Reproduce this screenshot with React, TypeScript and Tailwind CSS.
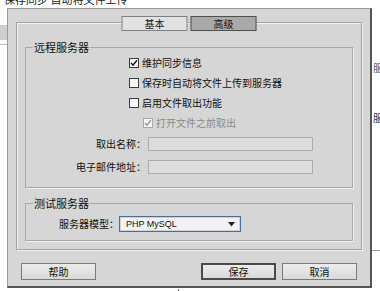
import React from "react";

// Dreamweaver-style "站点定义 › 高级" dialog, cropped
const CHECKS = [
  { label: "维护同步信息", checked: true },
  { label: "保存时自动将文件上传到服务器", checked: false },
  { label: "启用文件取出功能", checked: false },
];

function Check({ checked, disabled }: { checked: boolean; disabled?: boolean }) {
  return (
    <span
      className={
        "flex h-[10px] w-[10px] items-center justify-center border bg-[#f7f7f7] " +
        (disabled ? "border-[#a8a8a8]" : "border-[#3c3c3c]")
      }
    >
      {checked && (
        <svg width="8" height="8" viewBox="0 0 8 8">
          <path
            d="M1 4 L3 6.2 L7 1.2"
            fill="none"
            stroke={disabled ? "#9a9a9a" : "#111"}
            strokeWidth="1.4"
          />
        </svg>
      )}
    </span>
  );
}

function Button({ label, primary }: { label: string; primary?: boolean }) {
  return (
    <button
      type="button"
      className={
        "flex h-[17px] w-[75px] items-center justify-center bg-gradient-to-b from-[#ececec] to-[#d9d9d9] text-[10px] leading-none " +
        (primary ? "border-2 border-[#4a4a4a]" : "border border-[#7a7a7a]")
      }
    >
      {label}
    </button>
  );
}

export default function App() {
  return (
    <div className="relative h-[291px] w-[380px] overflow-hidden bg-white font-['Noto_Sans_CJK_SC',sans-serif] text-[10px] text-[#111]">
      {/* bits of the window behind the dialog */}
      <div className="absolute left-[4px] top-[-9px] whitespace-nowrap text-[11px] text-[#222]">
        保存同步 自动将文件上传
      </div>
      <div className="absolute left-0 top-[25px] h-[15px] w-[7px] bg-[#cfcfcf]" />
      <div className="absolute left-0 top-[44px] h-px w-[7px] bg-[#bdbdbd]" />
      <div className="absolute right-[-3px] top-[60px] text-[10px] text-[#555]">服</div>
      <div className="absolute right-[-3px] top-[110px] text-[10px] text-[#333]">服</div>
      <div className="absolute right-0 top-[250px] h-px w-[8px] bg-[#9a9a9a]" />
      <div className="absolute left-[178px] top-[289px] h-[2px] w-px bg-[#666]" />

      {/* dialog */}
      <div className="ml-[7px] mt-[8px] flex h-[280px] w-[365px] flex-col border border-r-2 border-b-2 border-[#9a9a9a] border-r-[#555] border-b-[#555] bg-[#d6d6d6]">
        <div className="relative mx-[8px] mt-[13px] flex flex-col border border-[#a2a2a2] px-[8px] pb-[8px] shadow-[inset_1px_1px_0_#f2f2f2,1px_1px_0_#f2f2f2]">
          {/* tabs sit on the panel border */}
          <div className="absolute left-1/2 top-[-7px] flex -translate-x-1/2 gap-[3px]">
            <div className="flex h-[15px] w-[66px] items-center justify-center border border-[#808080] bg-[#e2e2e2] leading-none">
              基本
            </div>
            <div className="flex h-[15px] w-[66px] items-center justify-center border border-[#505050] bg-[#a9a9a9] leading-none">
              高级
            </div>
          </div>

          <fieldset className="mt-[18px] border border-[#a8a8a8] pb-[13px] shadow-[1px_1px_0_#f0f0f0]">
            <legend className="ml-[7px] px-[1px] text-[11px] leading-[12px]">远程服务器</legend>
            <div className="flex flex-col pl-[103px]">
              {CHECKS.map((c) => (
                <div key={c.label} className="flex h-[20px] items-center gap-[3px]">
                  <Check checked={c.checked} />
                  <span className="leading-none">{c.label}</span>
                </div>
              ))}
              <div className="flex h-[20px] items-center gap-[3px] pl-[14px] text-[#8a8a8a]">
                <Check checked disabled />
                <span className="leading-none">打开文件之前取出</span>
              </div>
            </div>
            <div className="mt-[4px] grid grid-cols-[120px_165px] items-center gap-x-[2px] gap-y-[9px]">
              <span className="text-right leading-none">取出名称：</span>
              <div className="h-[14px] border border-[#ababab] bg-[#dddddd]" />
              <span className="text-right leading-none">电子邮件地址：</span>
              <div className="h-[14px] border border-[#ababab] bg-[#dddddd]" />
            </div>
          </fieldset>

          <fieldset className="mt-[9px] border border-[#a8a8a8] pb-[8px] shadow-[1px_1px_0_#f0f0f0]">
            <legend className="ml-[7px] px-[1px] text-[11px] leading-[12px]">测试服务器</legend>
            <div className="mt-[7px] flex items-center">
              <span className="w-[93px] text-right leading-none">服务器模型：</span>
              <div className="flex h-[16px] w-[122px] items-center justify-between border border-[#4f6d91] bg-[#f3f1f1] pl-[6px] pr-[5px] shadow-[inset_0_0_0_1px_#c9d3df]">
                <span className="font-['Liberation_Sans',sans-serif] text-[9px] leading-none">PHP MySQL</span>
                <svg width="7" height="5" viewBox="0 0 7 5">
                  <path d="M0 0 H7 L3.5 4.5 Z" fill="#222" />
                </svg>
              </div>
            </div>
          </fieldset>
        </div>

        <div className="mx-[13px] mt-[13px] flex items-center">
          <Button label="帮助" />
          <div className="flex-1" />
          <Button label="保存" primary />
          <div className="w-[6px]" />
          <Button label="取消" />
        </div>
      </div>
    </div>
  );
}
